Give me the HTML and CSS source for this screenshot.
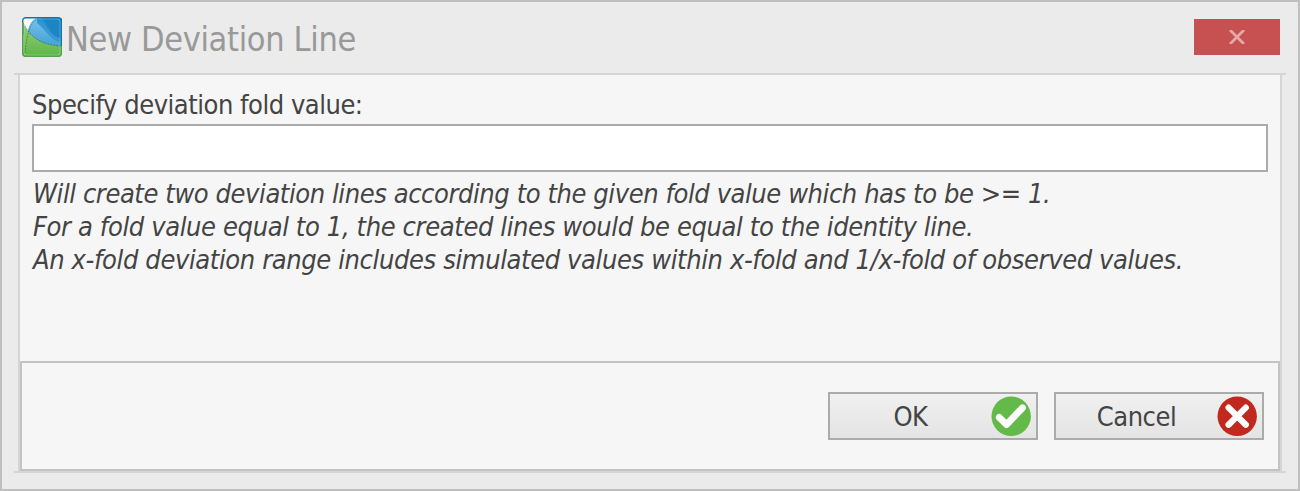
FILE: index.html
```html
<!DOCTYPE html>
<html lang="en">
<head>
<meta charset="utf-8">
<title>New Deviation Line</title>
<link rel="stylesheet" href="styles.css">
</head>
<body>
<div class="window">
  <header class="titlebar">
    <svg class="app-icon" width="40" height="40" viewBox="0 0 40 40">
      <defs>
        <clipPath id="tile"><rect width="40" height="40" rx="4"/></clipPath>
        <linearGradient id="green" x1="0" y1="0" x2="0" y2="1"><stop offset="0" stop-color="#9ccd80"/><stop offset="1" stop-color="#5cb646"/></linearGradient>
        <linearGradient id="sky" x1="0" y1="0" x2="0" y2="1"><stop offset="0" stop-color="#7cc0e6"/><stop offset="1" stop-color="#3a9fd8"/></linearGradient>
      </defs>
      <g clip-path="url(#tile)">
        <rect width="40" height="40" fill="#fff"/>
        <path d="M5 18C6 10 9 3 14 1H40V32H18Z" fill="url(#sky)"/>
        <path d="M15 1H40V26C29 24 24 13 15 6Z" fill="#3499d3"/>
        <path d="M18 1H40V21C27 19 27 6 18 1Z" fill="#1b86c4"/>
        <path d="M0 4C8 21 19 28 40 29V40H0Z" fill="url(#green)"/>
        <path d="M3 36C4 26 5 20 7 14" fill="none" stroke="#3b8c46" stroke-width=".8" stroke-dasharray="2 1"/>
        <path d="M7 14C9 8 11 4 15 2.500C26 4 26 19 40 21" fill="none" stroke="#1d6796" stroke-width=".7" stroke-dasharray="2 1" opacity=".75"/>
        <path d="M1 6C9 21 20 28 39 29" fill="none" stroke="#327e55" stroke-width=".8" stroke-dasharray="2 1"/>
      </g>
      <rect x="1.8" y="1.8" width="36.4" height="36.4" rx="3" fill="none" stroke="#fff" opacity=".35"/>
      <path d="M.7 18V4Q.7 .7 4 .7H36Q39.3 .7 39.3 4V29" fill="none" stroke="#1672a8" stroke-width="1.4"/>
      <path d="M.7 5V36Q.7 39.3 4 39.3H36Q39.3 39.3 39.3 36V29" fill="none" stroke="#55a152" stroke-width="1.4"/>
    </svg>
    <h1 class="title">New Deviation Line</h1>
    <button class="close" aria-label="Close">
      <svg width="18" height="14" viewBox="0 0 18 14"><path d="M2 0L16 14M16 0L2 14" fill="none" stroke="#e6a9a9" stroke-width="2.8"/></svg>
    </button>
  </header>
  <div class="frame">
    <main class="content">
      <label class="label" for="fold">Specify deviation fold value:</label>
      <input class="field" id="fold" type="text">
      <div class="hint">
        <p class="line line-create">Will create two deviation lines according to the given fold value which has to be &gt;= 1.</p>
        <p class="line">For a fold value equal to 1, the created lines would be equal to the identity line.</p>
        <p class="line">An x-fold deviation range includes simulated values within x-fold and 1/x-fold of observed values.</p>
      </div>
    </main>
    <footer class="actions">
      <button class="button"><span class="caption">OK</span>
        <svg class="badge" width="40" height="40" viewBox="0 0 40 40"><circle cx="20.2" cy="20.2" r="19.7" fill="#63ba49"/><path d="M8.200 21.300L15.500 28.600L31.500 11.800" fill="none" stroke="#fff" stroke-width="6.800" stroke-linecap="round" stroke-linejoin="round"/></svg>
      </button>
      <button class="button"><span class="caption">Cancel</span>
        <svg class="badge" width="40" height="40" viewBox="0 0 40 40"><circle cx="20.2" cy="20.2" r="19.7" fill="#c1291e"/><path d="M11.600 11.600L28.800 28.800M28.800 11.600L11.600 28.800" fill="none" stroke="#fff" stroke-width="6.200" stroke-linecap="round"/></svg>
      </button>
    </footer>
  </div>
</div>
</body>
</html>
```
FILE: styles.css
```css
* { box-sizing: border-box; }
body {
  margin: 0;
  font-family: "DejaVu Sans Condensed", "DejaVu Sans", sans-serif;
  font-stretch: condensed;
  font-size: 27px;
  color: #444;
}
.window {
  width: 1300px;
  height: 491px;
  border: 2px solid #bfbfbf;
  background: #ebebeb;
  padding: 0 12px;
}
.titlebar {
  display: flex;
  align-items: flex-start;
  height: 73px;
  padding: 15px 6px 0 8px;
  border-bottom: 2px solid #d5d5d5;
}
.title {
  margin: 0 auto 0 4px;
  font-size: 34px;
  font-weight: 400;
  line-height: 44px;
  letter-spacing: -0.35px;
  color: #999;
  white-space: nowrap;
}
.close {
  display: flex;
  align-items: center;
  justify-content: center;
  width: 86px;
  height: 36px;
  margin-top: 2px;
  padding: 0;
  border: 0;
  background: #c75050;
}
.frame {
  display: flex;
  flex-direction: column;
  height: 398px;
  border-bottom: 2px solid #d5d5d5;
  padding: 0 4px;
}
.content {
  flex: 1;
  border: solid #d5d5d5;
  border-width: 0 2px;
  background: #f6f6f6;
  padding: 12px 12px 0;
}
.label {
  display: block;
  height: 37px;
  line-height: 36px;
  letter-spacing: -0.48px;
  white-space: nowrap;
}
.field {
  display: block;
  width: 100%;
  height: 48px;
  border: 2px solid #ababab;
  background: #fff;
  outline: 0;
}
.hint { padding: 5px 0 0 1px; font-style: italic; }
.line { margin: 0; line-height: 33px; white-space: nowrap; letter-spacing: -0.38px; }
.line-create { letter-spacing: -0.42px; }
.actions {
  display: flex;
  align-items: flex-start;
  justify-content: flex-end;
  gap: 16px;
  height: 110px;
  margin: 0 2px;
  padding: 29px 14px 0 0;
  border: 2px solid #c3c3c3;
  background: #f6f6f6;
  box-shadow: -2px 0 #d5d5d5, 2px 0 #d5d5d5;
}
.button {
  display: flex;
  align-items: center;
  width: 210px;
  height: 48px;
  padding: 0 5px 0 0;
  border: 2px solid #ababab;
  background: linear-gradient(#f0f0f0, #e4e4e4);
  color: #444;
  font: inherit;
}
.caption { flex: 1; text-align: center; letter-spacing: -0.5px; }
```
